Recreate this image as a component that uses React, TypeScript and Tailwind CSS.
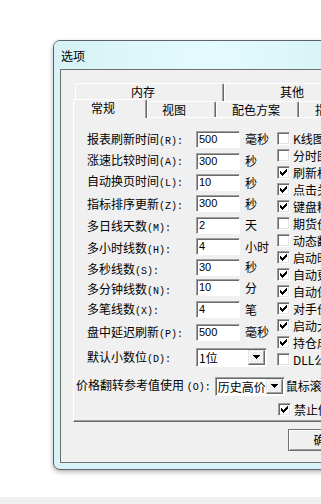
import React from 'react';

const cjk = "font-['Noto_Sans_CJK_SC',sans-serif]";

const Hot = ({ k }: { k: string }) => (
  <span className="font-['Liberation_Mono',monospace] text-[10px]">({k}):</span>
);

const CheckMark = () => (
  <svg width="7" height="7" viewBox="0 0 7 7" shapeRendering="crispEdges">
    <rect x="6" y="0" width="1" height="1" fill="#000" />
    <rect x="5" y="1" width="2" height="1" fill="#000" />
    <rect x="0" y="2" width="1" height="1" fill="#000" />
    <rect x="4" y="2" width="3" height="1" fill="#000" />
    <rect x="0" y="3" width="2" height="1" fill="#000" />
    <rect x="3" y="3" width="3" height="1" fill="#000" />
    <rect x="0" y="4" width="5" height="1" fill="#000" />
    <rect x="1" y="5" width="3" height="1" fill="#000" />
    <rect x="2" y="6" width="1" height="1" fill="#000" />
  </svg>
);

const CheckBox = ({ checked, text }: { checked: boolean; text: string }) => (
  <div className="flex items-center h-[17px] whitespace-nowrap">
    <span className="w-[13px] h-[13px] shrink-0 bg-white border border-t-[#a0a0a0] border-l-[#a0a0a0] border-r-white border-b-white shadow-[inset_1px_1px_0_#696969,inset_-1px_-1px_0_#e3e3e3] flex items-center justify-center">
      {checked && <CheckMark />}
    </span>
    <span className="ml-[3px] text-[12px] leading-[16px]">{text}</span>
  </div>
);

const DropArrow = () => (
  <span className="w-[17px] h-full shrink-0 bg-[#f0f0f0] border border-t-[#e3e3e3] border-l-[#e3e3e3] border-r-[#696969] border-b-[#696969] shadow-[inset_-1px_-1px_0_#a0a0a0,inset_1px_1px_0_#fff] flex items-center justify-center">
    <svg width="7" height="4" viewBox="0 0 7 4" shapeRendering="crispEdges">
      <path d="M0 0H7L3.5 4Z" fill="#000" />
    </svg>
  </span>
);

const Combo = ({ value, w }: { value: string; w: string }) => (
  <div className={`${w} h-[19px] shrink-0 bg-white border border-t-[#a0a0a0] border-l-[#a0a0a0] border-r-white border-b-white shadow-[inset_1px_1px_0_#696969] flex items-stretch p-[1px] pl-[2px]`}>
    <span className="flex-1 text-[12px] leading-[15px] whitespace-nowrap overflow-hidden">{value}</span>
    <DropArrow />
  </div>
);

const rows = [
  { label: '报表刷新时间', k: 'R', v: '500', unit: '毫秒', h: 'h-[22px]', ly: 'top-[1px]' },
  { label: '涨速比较时间', k: 'A', v: '300', unit: '秒', h: 'h-[22px]', ly: 'top-[0px]' },
  { label: '自动换页时间', k: 'L', v: '10', unit: '秒', h: 'h-[21px]', ly: 'top-[0px]' },
  { label: '指标排序更新', k: 'Z', v: '300', unit: '秒', h: 'h-[21px]', ly: 'top-[2px]' },
  { label: '多日线天数', k: 'M', v: '2', unit: '天', h: 'h-[22px]', ly: 'top-[2px]' },
  { label: '多小时线数', k: 'H', v: '4', unit: '小时', h: 'h-[21px]', ly: 'top-[3px]' },
  { label: '多秒线数', k: 'S', v: '30', unit: '秒', h: 'h-[20px]', ly: 'top-[3px]' },
  { label: '多分钟线数', k: 'N', v: '10', unit: '分', h: 'h-[21px]', ly: 'top-[3px]' },
  { label: '多笔线数', k: 'X', v: '4', unit: '笔', h: 'h-[23px]', ly: 'top-[1px]' },
  { label: '盘中延迟刷新', k: 'P', v: '500', unit: '毫秒', h: 'h-[22px]', ly: 'top-[1px]' },
];

const checks: [boolean, string][] = [
  [false, 'K线图显示标记'],
  [false, '分时图显示均线'],
  [true, '刷新标题栏'],
  [true, '点击关联'],
  [true, '键盘精灵'],
  [false, '期货价格'],
  [false, '动态翻页'],
  [true, '启动时检查'],
  [true, '自动更新'],
  [true, '自动保存'],
  [true, '对手价下单'],
  [true, '启动大字'],
  [true, '持仓成本'],
  [false, 'DLL公式'],
];

const tabBase =
  'shrink-0 bg-[#f0f0f0] border-t border-l border-white border-r border-r-[#696969] shadow-[inset_-1px_0_0_#a0a0a0] rounded-tl-[2px] rounded-tr-[2px] text-[12px] whitespace-nowrap';

export default function App() {
  return (
    <div className={`w-[321px] h-[504px] bg-white overflow-hidden flex flex-col text-black ${cjk}`}>
      <div className="ml-[53px] mt-[40px] w-[320px] h-[430px] shrink-0 border border-[#5d6266] rounded-[7px] bg-[#d8f3f7] flex flex-col shadow-[0_2px_5px_rgba(0,0,0,0.3)]">
        {/* title bar */}
        <div className="h-[28px] shrink-0 pl-[7px] flex items-center rounded-t-[6px] bg-gradient-to-r from-[#d6f2f6] via-[#e4fbfd] to-[#d3f1f5]">
          <span className="text-[12px] leading-[16px] pt-[1px]">选项</span>
        </div>

        {/* client */}
        <div className="ml-[6px] mb-[6px] flex-1 border border-[#6f6f6f] border-r-0 bg-[#f0f0f0] pl-[12px] pt-[13px]">
          {/* back tab row */}
          <div className="flex h-[18px] ml-[2px]">
            <div className={`${tabBase} w-[149px] pl-[55px] leading-[16px]`}>内存</div>
            <div className={`${tabBase} w-[149px] pl-[55px] leading-[16px]`}>其他</div>
          </div>
          {/* front tab row */}
          <div className="flex items-end h-[16px]">
            <div className={`${tabBase} relative top-[1px] z-10 w-[74px] h-[19px] pl-[17px] leading-[15px]`}>常规</div>
            <div className={`${tabBase} w-[69px] h-[16px] pl-[14px] leading-[15px]`}>视图</div>
            <div className={`${tabBase} w-[83px] h-[16px] pl-[15px] leading-[15px]`}>配色方案</div>
            <div className={`${tabBase} w-[80px] h-[16px] pl-[15px] leading-[15px]`}>指标设置</div>
          </div>

          {/* panel */}
          <div className="h-[305px] w-[300px] border-t border-l border-white border-b border-b-[#696969] shadow-[inset_0_-1px_0_#a0a0a0] flex flex-col">
            <div className="flex h-[254px] shrink-0">
              <div className="w-[203px] shrink-0 pl-[13px] pt-[10px] flex flex-col">
                {rows.map((r) => (
                  <div key={r.label} className={`${r.h} flex items-center shrink-0`}>
                    <span className={`w-[109px] shrink-0 text-[12px] leading-[16px] whitespace-nowrap relative ${r.ly}`}>
                      {r.label}
                      <Hot k={r.k} />
                    </span>
                    <div className="w-[44px] h-[17px] shrink-0 bg-white border border-t-[#a0a0a0] border-l-[#a0a0a0] border-r-white border-b-white shadow-[inset_1px_1px_0_#696969] pl-[2px] font-['Liberation_Sans',sans-serif] text-[11px] leading-[15px]">
                      {r.v}
                    </div>
                    <span className="ml-[5px] text-[12px] leading-[16px] whitespace-nowrap">{r.unit}</span>
                  </div>
                ))}
                <div className="h-[28px] flex items-center shrink-0">
                  <span className="w-[109px] shrink-0 text-[12px] leading-[16px] whitespace-nowrap relative top-[1px]">
                    默认小数位
                    <Hot k="D" />
                  </span>
                  <Combo value="1位" w="w-[71px]" />
                </div>
              </div>
              <div className="pt-[12px] flex flex-col">
                {checks.map(([c, t], i) => (
                  <CheckBox key={i} checked={c} text={t} />
                ))}
              </div>
            </div>

            <div className="mt-[5px] h-[18px] pl-[2px] flex items-center shrink-0 whitespace-nowrap">
              <span className="text-[12px] leading-[16px]">
                价格翻转参考值使用 <Hot k="O" />
              </span>
              <span className="ml-[4px]">
                <Combo value="历史高价" w="w-[70px]" />
              </span>
              <span className="ml-[1px] text-[12px] leading-[16px]">鼠标滚轮翻页</span>
            </div>

            <div className="mt-[6px] pl-[204px] shrink-0">
              <CheckBox checked={true} text="禁止修改" />
            </div>
          </div>

          {/* buttons */}
          <div className="flex mt-[7px]">
            <button className="ml-[215px] w-[75px] h-[22px] shrink-0 bg-[#f0f0f0] border border-[#707070] shadow-[inset_1px_1px_0_#fff,inset_-1px_-1px_0_#a0a0a0] text-[12px] leading-[16px]">
              确定
            </button>
          </div>
        </div>
      </div>
      <div className="flex-1" />
      <div className="h-[7px] shrink-0 bg-[#f0f0f0]" />
    </div>
  );
}
